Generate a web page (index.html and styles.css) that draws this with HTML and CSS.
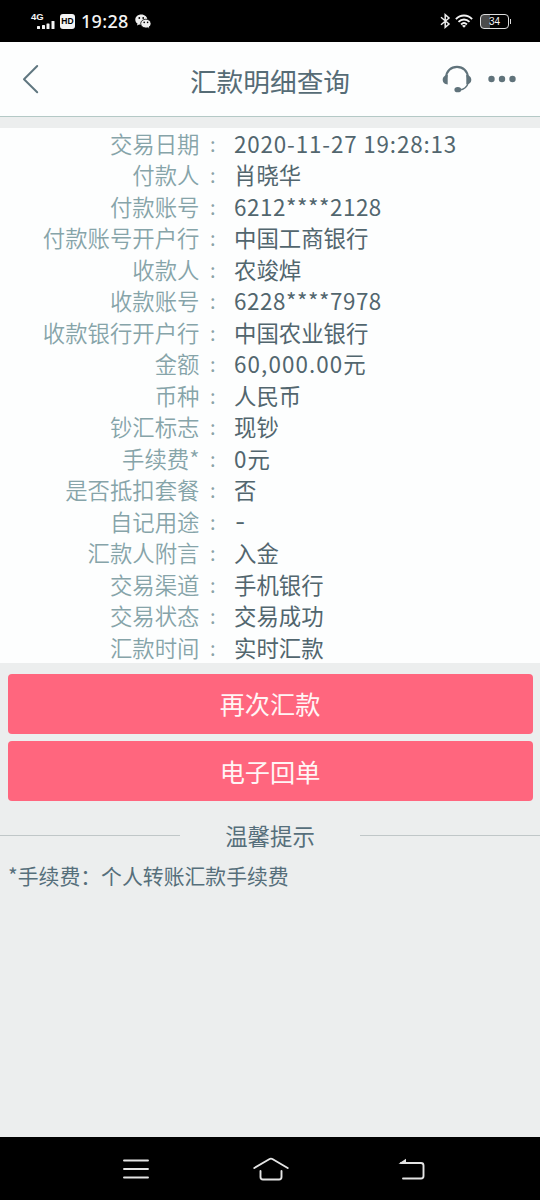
FILE: index.html
```html
<!DOCTYPE html>
<html lang="zh-CN">
<head>
<meta charset="utf-8">
<title>汇款明细查询</title>
<link rel="stylesheet" href="styles.css">
</head>
<body>
<div class="statusbar">
  <div class="status-left">
    <div class="network"><span class="gen">4G</span>
      <svg class="signal" width="20" height="10" viewBox="0 0 20 10" fill="#f4f4f4"><rect x="1" y="6" width="3" height="3" rx=".6"/><rect x="6" y="5" width="3" height="4" rx=".6"/><rect x="10.500" y="3.500" width="3" height="5.500" rx=".6"/><rect x="15.500" y="1" width="3" height="8" rx=".6"/></svg>
    </div>
    <span class="hd">HD</span>
    <span class="clock">19:28</span>
    <svg class="wechat" width="17" height="15" viewBox="0 0 17 15"><path d="M6.300.6C2.900.6.300 2.800.300 5.700c0 1.600.9 3 2.200 3.900l-.5 2 2.200-1.200c.7.2 1.400.3 2.100.3 3.300 0 6-2.200 6-5S9.700.6 6.300.6z" fill="#eee"/><circle cx="4.300" cy="4" r=".9"/><circle cx="8.200" cy="4" r=".9"/><path d="M10.900 5.200c-2.900 0-5.200 1.900-5.200 4.400s2.300 4.400 5.200 4.400c.6 0 1.200-.1 1.700-.2l1.800.9-.4-1.600c1.200-.8 2-2 2-3.500 0-2.500-2.300-4.400-5.100-4.400z" fill="#eee" stroke="#000" stroke-width=".8"/><circle cx="9.200" cy="8.400" r=".8"/><circle cx="12.600" cy="8.400" r=".8"/></svg>
  </div>
  <div class="status-right">
    <svg width="11" height="16" viewBox="0 0 11 16" fill="none" stroke="#eee" stroke-width="1.500"><path d="M1 4.300 9 11 5.200 14.300V1.700L9 5 1 11.700"/></svg>
    <svg class="wifi" width="18" height="14" viewBox="0 0 18 14" fill="none" stroke="#f4f4f4" stroke-width="1.900"><path d="M.9 5.100C5.500.3 12.500.3 17.100 5.100M3.500 7.900c3.200-3.200 7.800-3.200 11 0M6.100 10.500c1.700-1.700 4.100-1.700 5.800 0"/><path d="M9 13.800 7 11.700c1.200-1 2.800-1 4 0z" fill="#f4f4f4" stroke="none"/></svg>
    <div class="battery"><span>34</span></div>
  </div>
</div>
<header class="header">
  <svg class="back" width="17" height="30" viewBox="0 0 17 30" fill="none" stroke="#607780" stroke-width="2" stroke-linecap="round" stroke-linejoin="round"><path d="M15.200 2 2 15.300l13.200 13"/></svg>
  <h1 class="title">汇款明细查询</h1>
  <div class="actions">
    <svg width="30" height="28" viewBox="0 0 30 28" fill="none"><path d="M4.200 12.500C4.200 6 9 1.800 15 1.800S25.800 6 25.800 12.500" stroke="#60737b" stroke-width="2.200"/><path d="M5.700 10v9.500C2.800 19.500.7 17.500.7 14.800S2.800 10 5.700 10zM24.300 10v9.500c2.900 0 5-2 5-4.700S27.200 10 24.300 10z" fill="#60737b"/><path d="M26.200 18c-1.200 4-4.200 6.500-8.500 7" stroke="#60737b" stroke-width="1.300"/><ellipse cx="15.800" cy="24.700" rx="3.400" ry="2.600" fill="#60737b"/></svg>
    <svg width="28" height="8" viewBox="0 0 28 8" fill="#60737b"><circle cx="3.500" cy="4" r="3.200"/><circle cx="14" cy="4" r="3.200"/><circle cx="24.500" cy="4" r="3.200"/></svg>
  </div>
</header>
<main class="main">
  <dl class="details">
    <div class="row"><dt>交易日期</dt><i>:</i><dd class="date">2020-11-27 19:28:13</dd></div>
    <div class="row"><dt>付款人</dt><i>:</i><dd>肖晓华</dd></div>
    <div class="row"><dt>付款账号</dt><i>:</i><dd class="number">6212****2128</dd></div>
    <div class="row"><dt>付款账号开户行</dt><i>:</i><dd>中国工商银行</dd></div>
    <div class="row"><dt>收款人</dt><i>:</i><dd>农竣焯</dd></div>
    <div class="row"><dt>收款账号</dt><i>:</i><dd class="number">6228****7978</dd></div>
    <div class="row"><dt>收款银行开户行</dt><i>:</i><dd>中国农业银行</dd></div>
    <div class="row"><dt>金额</dt><i>:</i><dd class="amount">60,000.00元</dd></div>
    <div class="row"><dt>币种</dt><i>:</i><dd>人民币</dd></div>
    <div class="row"><dt>钞汇标志</dt><i>:</i><dd>现钞</dd></div>
    <div class="row"><dt>手续费*</dt><i>:</i><dd class="amount">0元</dd></div>
    <div class="row"><dt>是否抵扣套餐</dt><i>:</i><dd>否</dd></div>
    <div class="row"><dt>自记用途</dt><i>:</i><dd class="dash">-</dd></div>
    <div class="row"><dt>汇款人附言</dt><i>:</i><dd>入金</dd></div>
    <div class="row"><dt>交易渠道</dt><i>:</i><dd>手机银行</dd></div>
    <div class="row"><dt>交易状态</dt><i>:</i><dd>交易成功</dd></div>
    <div class="row"><dt>汇款时间</dt><i>:</i><dd>实时汇款</dd></div>
  </dl>
  <div class="buttons">
    <button class="button">再次汇款</button>
    <button class="button">电子回单</button>
  </div>
  <div class="tips">温馨提示</div>
  <p class="note">*手续费：个人转账汇款手续费</p>
</main>
<nav class="navbar">
  <svg width="26" height="20" viewBox="0 0 26 20" stroke="#e4e4e4" stroke-width="1.900" stroke-linecap="round"><path d="M1 1.500h24M1 10h24M1 18.500h24"/></svg>
  <svg class="home" width="36" height="24" viewBox="0 0 36 24" fill="none" stroke="#e4e4e4" stroke-width="1.900" stroke-linecap="round" stroke-linejoin="round"><path d="M1.300 11 16.200 2.200q1.800-1.100 3.600 0L34.700 11M7.500 14v6q0 2.500 2.500 2.500h16q2.500 0 2.500-2.500v-6"/></svg>
  <svg width="27" height="22" viewBox="0 0 27 22" fill="none" stroke="#e4e4e4" stroke-width="1.900" stroke-linecap="round"><path d="M3 5h20q2.500 0 2.500 2.500v10.500q0 2.500-2.500 2.500H5"/><path d="M.5 5.800 8 .8v5z" fill="#e4e4e4" stroke="none"/></svg>
</nav>
</body>
</html>
```
FILE: styles.css
```css
* { box-sizing: border-box; }
body {
  margin: 0;
  width: 540px;
  height: 1200px;
  display: flex;
  flex-direction: column;
  background: #eceeee;
  color: #52666e;
  font-family: "Noto Sans CJK SC", sans-serif;
  overflow: hidden;
}
svg { display: block; flex: none; }
.statusbar {
  height: 42px;
  flex: none;
  padding: 0 29px 0 31px;
  display: flex;
  justify-content: space-between;
  background: #000;
  color: #f4f4f4;
}
.status-left, .status-right { display: flex; align-items: center; }
.network { width: 25px; height: 18px; }
.gen {
  display: block;
  font: 700 9.500px/9px "Liberation Sans", sans-serif;
  height: 8px;
}
.signal { margin: 0 0 0 5px; }
.hd {
  width: 15px;
  height: 15px;
  margin-left: 4px;
  border-radius: 3px;
  background: #f4f4f4;
  color: #000;
  font: 700 8.500px/15px "Liberation Sans", sans-serif;
  text-align: center;
}
.clock {
  margin-left: 6px;
  width: 48px;
  font: 500 18px/40px "Noto Sans", sans-serif;
  letter-spacing: .3px;
  white-space: nowrap;
}
.wechat { margin-left: 6px; }
.wifi { margin: 0 7px 0 4px; }
.battery {
  width: 29px;
  height: 15px;
  position: relative;
  border: 1.500px solid #ddd;
  border-radius: 4px;
  background: linear-gradient(90deg, #4b4b4b 34%, #000 34%);
  font: 10px/13px "Liberation Sans", sans-serif;
  text-align: center;
}
.battery::after {
  content: "";
  position: absolute;
  right: -3px;
  top: 4px;
  width: 1px;
  height: 5px;
  background: #ddd;
}
.status-right { padding-right: 2px; }
.header {
  height: 75px;
  flex: none;
  display: grid;
  grid-template-columns: 120px 1fr 120px;
  align-items: center;
  padding: 0 24px 0 22px;
  background: #fdfefe;
  border-bottom: 1px solid #b4c9c6;
}
.title {
  margin: 0;
  padding: 3px 0 0 2px;
  font-size: 26.700px;
  font-weight: 400;
  line-height: 40px;
  text-align: center;
  color: #566c76;
}
.actions {
  display: flex;
  align-items: center;
  justify-content: flex-end;
  gap: 16px;
}
.main { flex: 1; padding-top: 10.500px; }
.details {
  margin: 0;
  background: #fdfefe;
}
.row {
  height: 31.500px;
  display: grid;
  grid-template-columns: 199.500px 34.500px 1fr;
  font-size: 22.400px;
  line-height: 31.500px;
}
.row dt { text-align: right; color: #86a4a9; font-weight: 350; }
.row i {
  text-align: center;
  font-style: normal;
  font-size: 20px;
  color: #8ba4a8;
  padding-right: 8px;
}
.row dd { margin: 0; white-space: nowrap; font-weight: 400; }
.row .date { letter-spacing: .85px; }
.row .number { letter-spacing: .55px; }
.row .amount { letter-spacing: 1.100px; }
.row .dash { padding-left: 1px; font-family: Inter, sans-serif; }
.buttons {
  padding: 10.500px 7.500px 0;
  display: flex;
  flex-direction: column;
  gap: 7.500px;
}
.button {
  height: 60px;
  border: 0;
  border-radius: 4px;
  background: #ff667e;
  color: #fff5f5;
  font: 400 25.200px/58px "Noto Sans CJK SC", sans-serif;
  padding: 0 0 1px;
}
.tips {
  margin-top: 17px;
  display: grid;
  grid-template-columns: 180px 180px 180px;
  align-items: center;
  height: 34px;
  text-align: center;
  font-size: 22.400px;
  line-height: 32px;
  white-space: nowrap;
  color: #566f7b;
}
.tips::before, .tips::after { content: ""; height: 1px; background: #c0c7c8; }
.note {
  margin: 8px 0 0 8px;
  font-size: 20.850px;
  line-height: 30px;
  color: #566f7b;
}
.navbar {
  height: 63px;
  flex: none;
  display: flex;
  justify-content: space-between;
  align-items: center;
  padding: 0 115px 0 123px;
  background: #000;
}
.home { margin-right: 5px; }
```
